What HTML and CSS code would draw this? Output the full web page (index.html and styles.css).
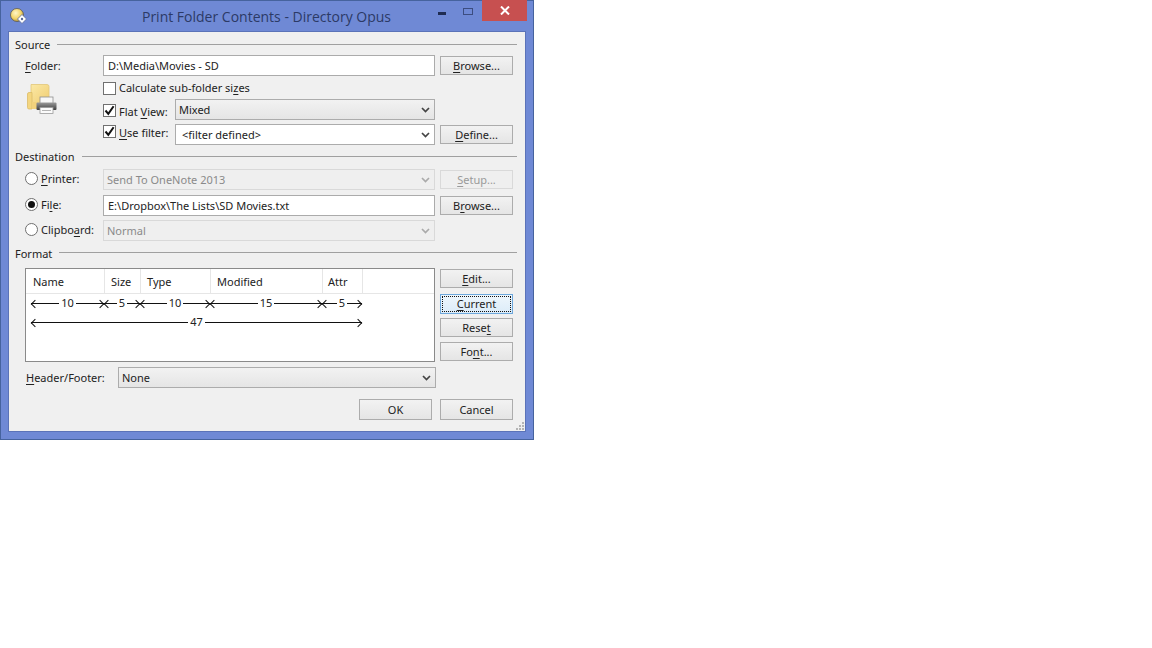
FILE: index.html
```html
<!DOCTYPE html>
<html lang="en">
<head>
<meta charset="utf-8">
<title>Print Folder Contents - Directory Opus</title>
<link rel="stylesheet" href="styles.css">
</head>
<body>
<div class="window">
  <div class="titlebar">
    <svg class="app-icon" width="18" height="18" viewBox="0 0 18 18">
      <defs><radialGradient id="sun" cx="0.4" cy="0.35" r="0.7"><stop offset="0" stop-color="#fff6c8"/><stop offset="0.6" stop-color="#f3d468"/><stop offset="1" stop-color="#a98a3a"/></radialGradient></defs>
      <circle cx="8" cy="8" r="6.5" fill="url(#sun)" stroke="#5d5a52" stroke-width="0.8"/>
      <path d="M13 7.5 L17.5 12 L13 16.5 L8.5 12 Z" fill="#fff" stroke="#5b6a99" stroke-width="0.8"/>
      <circle cx="13" cy="12" r="1.2" fill="#5b6a99"/>
    </svg>
    <div class="title">Print Folder Contents - Directory Opus</div>
    <div class="controls">
      <span class="ctl-min"></span>
      <span class="ctl-max"></span>
      <span class="ctl-close">
        <svg width="10" height="9" viewBox="0 0 10 9"><path d="M1 0.5 L9 8.5 M9 0.5 L1 8.5" stroke="#fff" stroke-width="2"/></svg>
      </span>
    </div>
  </div>
  <div class="client">
    <div class="group-head head-source"><span>Source</span><i></i></div>
    <div class="grid grid-source">
      <div class="label"><u>F</u>older:</div>
      <div class="field span2">D:\Media\Movies - SD</div>
      <div class="btn"><u>B</u>rowse...</div>

      <div class="icon-cell">
        <svg width="32" height="32" viewBox="0 0 32 32">
          <defs><linearGradient id="fold" x1="0" y1="0" x2="1" y2="1"><stop offset="0" stop-color="#fbe9a6"/><stop offset="1" stop-color="#f0cd72"/></linearGradient><linearGradient id="prn" x1="0" y1="0" x2="0" y2="1"><stop offset="0" stop-color="#9a9a9a"/><stop offset="1" stop-color="#3e3e3e"/></linearGradient></defs>
          <path d="M5 1.5 H21 Q23 1.5 23 3.5 V20 H5 Z" fill="url(#fold)" stroke="#e2c678" stroke-width="0.8"/>
          <path d="M1.5 11 Q1.5 9.5 3 9.5 H6 V26 H3 Q1.5 26 1.5 24.5 Z" fill="#f4d680" stroke="#dcbd68" stroke-width="0.8"/>
          <rect x="6" y="19" width="15" height="7" fill="#f2d27c"/>
          <rect x="14" y="14" width="13" height="7" fill="#f7f7f7" stroke="#8f8f8f" stroke-width="0.8"/>
          <rect x="10.5" y="19.5" width="20" height="7.5" rx="1" fill="url(#prn)"/>
          <rect x="14" y="24.5" width="13" height="6" fill="#fbfbfb" stroke="#9a9a9a" stroke-width="0.8"/>
          <rect x="16" y="27" width="9" height="1" fill="#b5b5b5"/>
        </svg>
      </div>
      <label class="check-line span3 calc"><span class="box"></span><span>Calculate sub-folder si<u>z</u>es</span></label>
      <label class="check-line flat"><span class="box on"><svg width="11" height="11" viewBox="0 0 11 11"><path d="M1.5 5.5 L4.3 8.8 L9.6 1.2" fill="none" stroke="#111" stroke-width="2"/></svg></span><span>Flat <u>V</u>iew:</span></label>
      <div class="select"><span>Mixed</span><svg class="chev" width="9" height="6" viewBox="0 0 9 6"><path d="M1 1 L4.5 4.5 L8 1" fill="none" stroke="#444" stroke-width="1.7"/></svg></div>
      <div></div>
      <label class="check-line filter"><span class="box on"><svg width="11" height="11" viewBox="0 0 11 11"><path d="M1.5 5.5 L4.3 8.8 L9.6 1.2" fill="none" stroke="#111" stroke-width="2"/></svg></span><span><u>U</u>se filter:</span></label>
      <div class="select white"><span class="pad">&lt;filter defined&gt;</span><svg class="chev" width="9" height="6" viewBox="0 0 9 6"><path d="M1 1 L4.5 4.5 L8 1" fill="none" stroke="#444" stroke-width="1.7"/></svg></div>
      <div class="btn"><u>D</u>efine...</div>
    </div>

    <div class="group-head head-dest"><span>Destination</span><i></i></div>
    <div class="grid grid-dest">
      <label class="radio-line"><span class="radio"></span><span><u>P</u>rinter:</span></label>
      <div class="select off span2"><span>Send To OneNote 2013</span><svg class="chev" width="9" height="6" viewBox="0 0 9 6"><path d="M1 1 L4.5 4.5 L8 1" fill="none" stroke="#aaa" stroke-width="1.7"/></svg></div>
      <div class="btn off"><u>S</u>etup...</div>

      <label class="radio-line"><span class="radio on"></span><span>Fi<u>l</u>e:</span></label>
      <div class="field span2">E:\Dropbox\The Lists\SD Movies.txt</div>
      <div class="btn">B<u>r</u>owse...</div>

      <label class="radio-line"><span class="radio"></span><span>Clipbo<u>a</u>rd:</span></label>
      <div class="select off span2"><span>Normal</span><svg class="chev" width="9" height="6" viewBox="0 0 9 6"><path d="M1 1 L4.5 4.5 L8 1" fill="none" stroke="#aaa" stroke-width="1.7"/></svg></div>
      <div></div>
    </div>

    <div class="group-head head-format"><span>Format</span><i></i></div>
    <div class="format">
      <div class="preview">
        <div class="pv-head">
          <div class="col c-name">Name</div>
          <div class="col c-size">Size</div>
          <div class="col c-type">Type</div>
          <div class="col c-mod">Modified</div>
          <div class="col c-attr">Attr</div>
        </div>
        <div class="dims dims-first">
          <div class="dim d-name"><i></i><span>10</span><i></i></div>
          <div class="dim c-size"><i></i><span>5</span><i></i></div>
          <div class="dim c-type"><i></i><span>10</span><i></i></div>
          <div class="dim c-mod"><i></i><span>15</span><i></i></div>
          <div class="dim c-attr"><i></i><span>5</span><i></i></div>
        </div>
        <div class="dims">
          <div class="dim d-total"><i></i><span>47</span><i></i></div>
        </div>
      </div>
      <div class="side">
        <div class="btn"><u>E</u>dit...</div>
        <div class="btn focus"><span><u>C</u>urrent</span></div>
        <div class="btn">Rese<u>t</u></div>
        <div class="btn">Fo<u>n</u>t...</div>
      </div>
    </div>
    <div class="hf">
      <div class="label"><u>H</u>eader/Footer:</div>
      <div class="select"><span>None</span><svg class="chev" width="9" height="6" viewBox="0 0 9 6"><path d="M1 1 L4.5 4.5 L8 1" fill="none" stroke="#444" stroke-width="1.7"/></svg></div>
    </div>
    <div class="actions">
      <div class="btn tall">OK</div>
      <div class="btn tall">Cancel</div>
    </div>
    <div class="grip">
      <svg width="10" height="10" viewBox="0 0 10 10"><g fill="#b4b4b4"><rect x="7" y="1" width="2" height="2"/><rect x="4" y="4" width="2" height="2"/><rect x="7" y="4" width="2" height="2"/><rect x="1" y="7" width="2" height="2"/><rect x="4" y="7" width="2" height="2"/><rect x="7" y="7" width="2" height="2"/></g></svg>
    </div>
  </div>
</div>
</body>
</html>
```
FILE: styles.css
```css
* { box-sizing: border-box; }
html, body { margin: 0; padding: 0; background: #fff; }
body { width: 1152px; height: 648px; overflow: hidden; font: 11px "Noto Sans", "Open Sans", sans-serif; color: #1a1a1a; }
u { text-decoration: underline; text-underline-offset: 2px; }

.window {
  width: 534px; height: 440px;
  background: #6f89d5;
  border: 1px solid #46639e;
  display: flex; flex-direction: column;
  padding: 0 7px 7px 7px;
}
.titlebar { height: 30px; display: flex; align-items: center; position: relative; }
.app-icon { position: absolute; left: 1px; top: 6px; }
.title { flex: 1; text-align: center; font: 14px "Open Sans", "Noto Sans", sans-serif; color: #2c3a66; padding: 0 1px 0 0; }
.controls { position: absolute; right: -1px; top: -1px; display: flex; align-items: flex-start; }
.ctl-min { width: 8px; height: 3px; background: #1f2c52; margin: 12px 17px 0 0; }
.ctl-max { width: 10px; height: 7px; border: 1px solid #3c4d80; margin: 8px 9px 0 0; }
.ctl-close { width: 45px; height: 21px; background: #c75050; display: flex; align-items: center; justify-content: center; }

.client {
  flex: 1;
  background: #f0f0f0;
  border: 1px solid #5b73b8;
  position: relative;
  padding: 0 8px 0 6px;
  display: flex; flex-direction: column;
}
.group-head { display: flex; align-items: center; height: 16px; }
.group-head span { color: #222; }
.group-head i { flex: 1; height: 1px; background: #a0a0a0; margin: 0 0 0 7px; }
.head-source { margin-top: 4px; }
.head-dest { margin-top: 3px; }
.head-format { margin-top: 4px; }
.head-format i { margin-top: -2px; }

.grid { display: grid; grid-template-columns: 78px 72px 260px 73px; margin-left: 10px; }
.grid-source { margin-top: 3px; grid-template-rows: 21px 15px 21px 21px; row-gap: 4px; }
.grid-dest { margin-top: 5px; grid-template-rows: 26px 25px 21px; }
.grid > .btn { width: 73px; justify-self: end; margin-right: -5px; margin-top: 1px; }
.span2 { grid-column: span 2; }
.span3 { grid-column: span 3; }

.label { align-self: center; color: #222; }
.grid-source .label { margin-bottom: 1px; }
.field { height: 21px; background: #fff; border: 1px solid #ababab; padding-left: 4px; line-height: 19px; color: #222; white-space: nowrap; overflow: hidden; }
.btn { width: 73px; height: 19px; background: linear-gradient(#f2f2f2, #e5e5e5); border: 1px solid #acacac; text-align: center; line-height: 17px; color: #222; }
.btn.off { background: #efefef; border-color: #d9d9d9; color: #9a9a9a; }
.btn.focus { height: 20px; margin: 1px 0 -1px; background: linear-gradient(#eef6fc, #dcecf9); border-color: #6ea8dc; padding: 1px; line-height: 14px; }
.btn.focus span { display: block; height: 16px; border: 1px dotted #111; }
.btn.tall { height: 21px; line-height: 19px; }

.select { height: 21px; background: linear-gradient(#f2f2f2, #e5e5e5); border: 1px solid #acacac; display: flex; align-items: center; justify-content: space-between; padding: 0 4px 0 3px; color: #222; }
.select.white { background: #fff; }
.select.off { background: #efefef; border-color: #d9d9d9; color: #8a8a8a; }
.select .pad { padding-left: 3px; }

.check-line { display: flex; align-items: center; gap: 3px; color: #222; }
.calc { align-items: flex-end; }
.flat, .filter { align-items: flex-start; padding-top: 5px; }
.filter { padding-top: 1px; }
.box { width: 13px; height: 13px; background: #fff; border: 1px solid #707070; display: flex; align-items: center; justify-content: center; flex: none; }
.icon-cell { grid-row: span 3; padding: 3px 0 0 1px; }
.radio-line { display: flex; align-items: center; gap: 3px; color: #222; align-self: start; padding-top: 2px; }
.radio { width: 13px; height: 13px; border-radius: 50%; background: #fff; border: 1px solid #707070; display: flex; align-items: center; justify-content: center; flex: none; }
.radio.on::after { content: ""; width: 7px; height: 7px; border-radius: 50%; background: #111; }

.format { display: flex; margin: 7px 0 0 10px; gap: 5px; }
.preview { width: 410px; height: 94px; background: #fff; border: 1px solid #8a8a8a; }
.pv-head { display: flex; height: 25px; border-bottom: 1px solid #e6e6e6; }
.col { border-right: 1px solid #e6e6e6; padding: 2px 0 0 7px; color: #222; flex: none; line-height: 21px; }
.c-name { width: 79px; }
.c-size { width: 36px; padding-left: 6px; }
.c-type { width: 70px; padding-left: 6px; }
.c-mod { width: 112px; padding-left: 6px; }
.c-attr { width: 40px; padding-left: 5px; }
.dims { display: flex; height: 20px; align-items: center; padding-left: 5px; }
.dims-first { margin: -1px 0 -1px; }
.d-name { width: 73px; }
.d-total { width: 331px; }
.dim { display: flex; align-items: center; position: relative; flex: none; gap: 2px; padding: 0; }
.dim i { flex: 1; height: 1px; background: #111; }
.dim span { line-height: 14px; color: #222; }
.dim::before, .dim::after { content: ""; position: absolute; top: 50%; width: 5px; height: 5px; margin-top: -2.5px; transform: rotate(45deg); }
.dim::before { left: 1px; border-left: 1px solid #111; border-bottom: 1px solid #111; }
.dim::after { right: 1px; border-right: 1px solid #111; border-top: 1px solid #111; }

.side { display: flex; flex-direction: column; gap: 5px; padding-top: 1px; }

.hf { display: flex; align-items: center; margin: 5px 0 0 11px; }
.hf .label { width: 92px; }
.hf .select { width: 318px; }
.actions { display: flex; justify-content: flex-end; gap: 8px; margin: 11px 4px 0 0; }
.grip { position: absolute; right: 0; bottom: 0; width: 10px; height: 10px; line-height: 0; }
```
